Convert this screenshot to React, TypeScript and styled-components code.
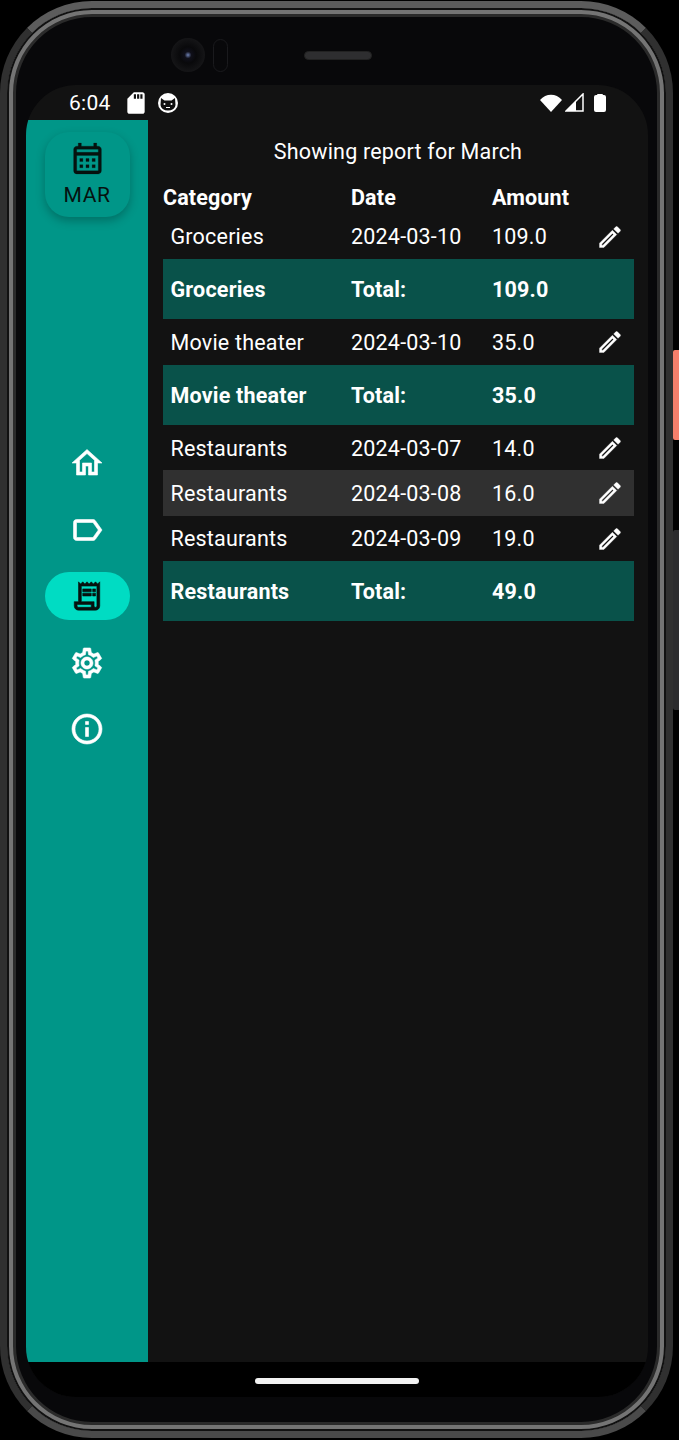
import React from "react";
import styled, { createGlobalStyle } from "styled-components";
import {
  MdOutlineHome,
  MdOutlineLabel,
  MdOutlineReceiptLong,
  MdOutlineSettings,
  MdInfoOutline,
  MdOutlineCalendarMonth,
  MdOutlineEdit,
  MdSdCard,
} from "react-icons/md";

const GlobalStyle = createGlobalStyle`
  html, body {
    margin: 0;
    padding: 0;
    background: #000;
  }
  body {
    width: 679px;
    height: 1440px;
    overflow: hidden;
    font-family: Roboto, "Liberation Sans", sans-serif;
  }
`;

const Page = styled.div`
  position: relative;
  width: 679px;
  height: 1440px;
  background: #000;
  padding-top: 1px;
  box-sizing: border-box;
`;

const Phone = styled.div`
  width: 673px;
  height: 1437px;
  box-sizing: border-box;
  padding: 0 18px 0 19px;
  border: 7px solid;
  border-color: #5c5c5c #303030 #4a4a4a #303030;
  border-radius: 92px;
  background: #08080a;
  box-shadow: inset 0 0 0 2px #111, inset 0 0 0 6px #747474, inset 0 0 0 9px #2a2a2a;
`;

const TopBezel = styled.div`
  height: 77px;
  display: flex;
  align-items: center;
  padding: 17px 0 0 145px;
  box-sizing: border-box;
`;

const Camera = styled.div`
  width: 34px;
  height: 34px;
  border-radius: 50%;
  background: radial-gradient(circle at 50% 50%, #6f82b4 0, #10101a 14%, #09090b 34%, #151517 70%, #0e0e10 100%);
`;

const Sensor = styled.div`
  width: 15px;
  height: 33px;
  margin-left: 8px;
  border-radius: 8px;
  border: 1px solid #1a1a1d;
  box-sizing: border-box;
`;

const Speaker = styled.div`
  width: 68px;
  height: 9px;
  margin-left: 76px;
  border-radius: 5px;
  background: #2e2e30;
  border: 1px solid #222;
  box-sizing: border-box;
`;

const Screen = styled.div`
  width: 622px;
  height: 1312px;
  border-radius: 50px;
  overflow: hidden;
  display: flex;
  flex-direction: column;
  background: #121212;
  color: #fff;
`;

const StatusBar = styled.div`
  height: 35px;
  flex: none;
  display: flex;
  align-items: center;
  padding: 0 36px 0 43px;
  font-size: 21px;
  letter-spacing: 0.3px;
`;

const StatusTime = styled.span`
  width: 53.5px;
`;

const CatBadge = styled.svg`
  margin-left: 9.5px;
`;

const StatusRight = styled.div`
  margin-left: auto;
  display: flex;
  align-items: center;
  gap: 4px;
`;

const WifiIcon = styled.svg`
  margin-right: -2px;
`;

const Body = styled.div`
  flex: 1;
  display: flex;
  min-height: 0;
`;

const Sidebar = styled.aside`
  width: 122px;
  flex: none;
  background: #009688;
  display: flex;
  flex-direction: column;
  align-items: center;
  padding-top: 12px;
  box-sizing: border-box;
`;

const MonthCard = styled.div`
  width: 85px;
  height: 85px;
  border-radius: 24px;
  background: #009688;
  box-shadow: 0 4px 10px rgba(0, 0, 0, 0.25);
  display: flex;
  flex-direction: column;
  align-items: center;
  padding-top: 8px;
  box-sizing: border-box;
  color: #06120f;
  font-size: 21px;
  line-height: 25px;
  letter-spacing: 0.6px;
  gap: 5.5px;

  & svg path:not([fill="none"]) {
    stroke: currentColor;
    stroke-width: 0.15;
  }
`;

const NavList = styled.nav`
  margin-top: 222px;
  display: flex;
  flex-direction: column;
  gap: 18.5px;
`;

const NavItem = styled.div<{ $active?: boolean }>`
  width: 85px;
  height: 48px;
  border-radius: 24px;
  display: flex;
  align-items: center;
  justify-content: center;
  background: ${({ $active }) => ($active ? "#00dcc3" : "transparent")};
  color: ${({ $active }) => ($active ? "#06120f" : "#fff")};

  & svg path:not([fill="none"]) {
    stroke: currentColor;
    stroke-width: 0.4;
  }
`;

const Main = styled.main`
  flex: 1;
  padding: 0 14px 0 15px;
  min-width: 0;
`;

const Title = styled.div`
  height: 62px;
  display: flex;
  align-items: center;
  justify-content: center;
  padding-right: 1px;
  box-sizing: border-box;
  font-size: 21.5px;
  letter-spacing: 0.2px;
`;

const columns = "188px 141px 142px";

const HeadRow = styled.div`
  display: grid;
  grid-template-columns: ${columns};
  height: 31.6px;
  padding-bottom: 1px;
  box-sizing: border-box;
  align-items: center;
  font-size: 21.5px;
  font-weight: 700;
  letter-spacing: 0.15px;
`;

const EntryRow = styled.div<{ $hover?: boolean }>`
  display: grid;
  grid-template-columns: ${columns};
  height: 45.3px;
  padding-top: 1px;
  box-sizing: border-box;
  align-items: center;
  font-size: 21.5px;
  letter-spacing: 0.2px;
  background: ${({ $hover }) => ($hover ? "#303030" : "transparent")};
`;

const TotalRow = styled.div`
  display: grid;
  grid-template-columns: ${columns};
  height: 60.4px;
  padding-top: 0.6px;
  box-sizing: border-box;
  align-items: center;
  font-size: 21.5px;
  font-weight: 700;
  letter-spacing: 0.2px;
  background: #09524a;
`;

const CategoryCell = styled.span`
  padding-left: 7.5px;
`;

const AmountCell = styled.div`
  display: flex;
  align-items: center;
  justify-content: space-between;
  padding-right: 10px;

  & svg path:not([fill="none"]) {
    stroke: currentColor;
    stroke-width: 0.3;
  }
`;

const NavBar = styled.div`
  height: 35px;
  flex: none;
  background: #000;
  display: flex;
  justify-content: center;
  padding-top: 16px;
  box-sizing: border-box;
`;

const HomeIndicator = styled.div`
  width: 164px;
  height: 6px;
  border-radius: 3px;
  background: #f2f2f2;
`;

const SideButton = styled.div<{ $top: number; $height: number; $color: string }>`
  position: absolute;
  right: 0;
  top: ${({ $top }) => $top}px;
  width: 6px;
  height: ${({ $height }) => $height}px;
  background: ${({ $color }) => $color};
  border-radius: 2px 0 0 2px;
`;

type Entry = { category: string; date: string; amount: string };

const groups: { category: string; total: string; entries: Entry[] }[] = [
  {
    category: "Groceries",
    total: "109.0",
    entries: [{ category: "Groceries", date: "2024-03-10", amount: "109.0" }],
  },
  {
    category: "Movie theater",
    total: "35.0",
    entries: [{ category: "Movie theater", date: "2024-03-10", amount: "35.0" }],
  },
  {
    category: "Restaurants",
    total: "49.0",
    entries: [
      { category: "Restaurants", date: "2024-03-07", amount: "14.0" },
      { category: "Restaurants", date: "2024-03-08", amount: "16.0" },
      { category: "Restaurants", date: "2024-03-09", amount: "19.0" },
    ],
  },
];

function App() {
  return (
    <Page>
      <GlobalStyle />
      <SideButton $top={350} $height={90} $color="#f47f6b" />
      <SideButton $top={530} $height={180} $color="#2c2c2e" />
      <Phone>
        <TopBezel>
          <Camera />
          <Sensor />
          <Speaker />
        </TopBezel>
        <Screen>
          <StatusBar>
            <StatusTime>6:04</StatusTime>
            <MdSdCard size={26} />
            <CatBadge width="20" height="20" viewBox="0 0 20 20">
              <circle cx="10" cy="10" r="10" fill="#fff" />
              <path d="M3 5l3.5 2.5h7L17 5l.5 7a7.5 5.5 0 0 1-15 0z" fill="#111" />
              <circle cx="6.5" cy="11" r="1" fill="#fff" />
              <circle cx="13.5" cy="11" r="1" fill="#fff" />
              <path d="M8 14.5h4" stroke="#fff" strokeWidth="1" />
            </CatBadge>
            <StatusRight>
              <WifiIcon width="24" height="20" viewBox="0 0 24 20">
                <path d="M12 19L1 7C7 0 17 0 23 7z" fill="#fff" />
              </WifiIcon>
              <svg width="19" height="19" viewBox="0 0 19 19">
                <path d="M18 1v17H1z" fill="none" stroke="#fff" strokeWidth="1.5" />
                <path d="M11 8v10H1z" fill="#fff" />
              </svg>
              <svg width="24" height="20" viewBox="0 0 24 20">
                <path
                  d="M9 2q0-1 1-1h4q1 0 1 1h1q2 0 2 2v13q0 2-2 2H8q-2 0-2-2V4q0-2 2-2z"
                  fill="#fff"
                />
              </svg>
            </StatusRight>
          </StatusBar>
          <Body>
            <Sidebar>
              <MonthCard>
                <MdOutlineCalendarMonth size={37} />
                MAR
              </MonthCard>
              <NavList>
                <NavItem><MdOutlineHome size={36} /></NavItem>
                <NavItem><MdOutlineLabel size={36} /></NavItem>
                <NavItem $active><MdOutlineReceiptLong size={34} /></NavItem>
                <NavItem><MdOutlineSettings size={36} /></NavItem>
                <NavItem><MdInfoOutline size={36} /></NavItem>
              </NavList>
            </Sidebar>
            <Main>
              <Title>Showing report for March</Title>
              <HeadRow>
                <span>Category</span>
                <span>Date</span>
                <span>Amount</span>
              </HeadRow>
              {groups.map((group) => (
                <React.Fragment key={group.category}>
                  {group.entries.map((entry) => (
                    <EntryRow key={entry.date + entry.category} $hover={entry.date === "2024-03-08"}>
                      <CategoryCell>{entry.category}</CategoryCell>
                      <span>{entry.date}</span>
                      <AmountCell>
                        {entry.amount}
                        <MdOutlineEdit size={28} />
                      </AmountCell>
                    </EntryRow>
                  ))}
                  <TotalRow>
                    <CategoryCell>{group.category}</CategoryCell>
                    <span>Total:</span>
                    <span>{group.total}</span>
                  </TotalRow>
                </React.Fragment>
              ))}
            </Main>
          </Body>
          <NavBar>
            <HomeIndicator />
          </NavBar>
        </Screen>
      </Phone>
    </Page>
  );
}

export default App;
